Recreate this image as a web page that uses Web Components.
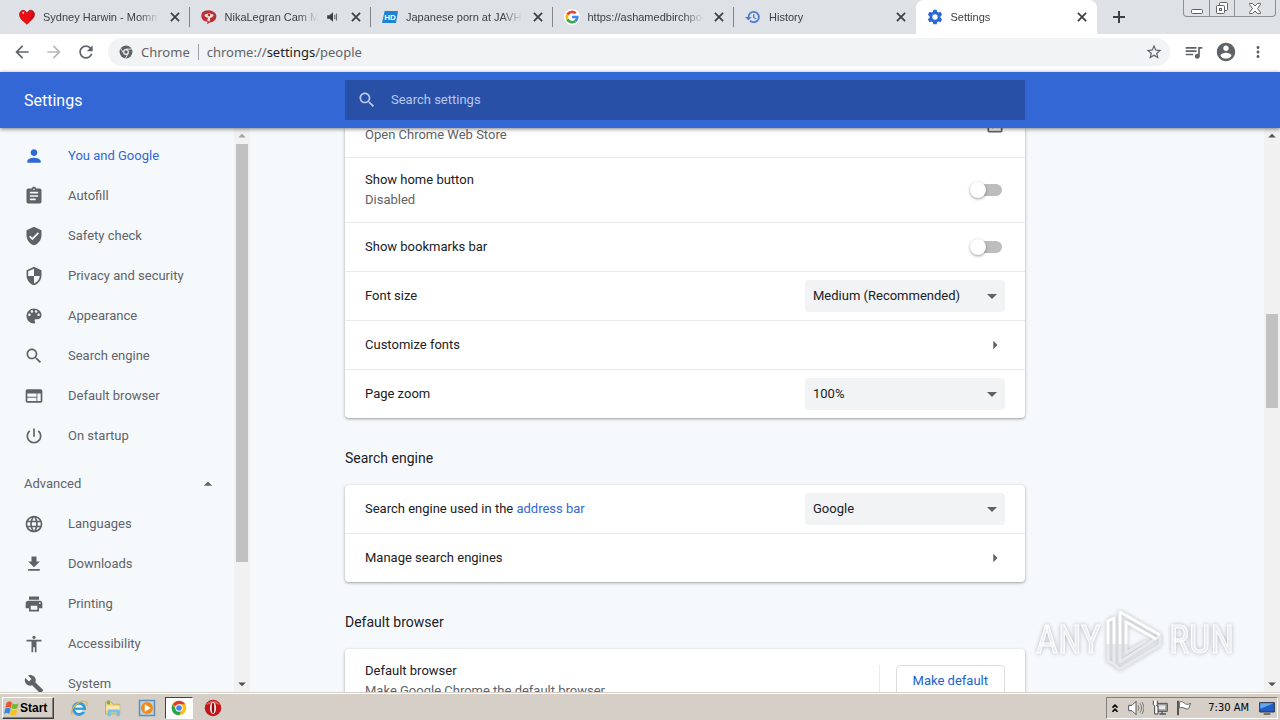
<!DOCTYPE html>
<html lang="en">
<head>
<meta charset="utf-8">
<title>Settings</title>
<style>
  html, body { height: 100%; margin: 0; }
  body {
    display: flex;
    flex-direction: column;
    overflow: hidden;
    background: #f6f9fc;
    color: #202124;
    font: 13px/20px Roboto, "Liberation Sans", sans-serif;
  }
  main { flex: 1; min-height: 0; display: flex; position: relative; }
</style>
</head>
<body>
<tab-strip>
  <browser-tab icon="heart">Sydney Harwin - Mommy</browser-tab>
  <browser-tab icon="cam" audio>NikaLegran Cam Models</browser-tab>
  <browser-tab icon="hd">Japanese porn at JAVHD</browser-tab>
  <browser-tab icon="google">https://ashamedbirchpoe</browser-tab>
  <browser-tab icon="history">History</browser-tab>
  <browser-tab icon="gear" active>Settings</browser-tab>
</tab-strip>
<browser-toolbar></browser-toolbar>
<settings-header></settings-header>
<main>
  <side-nav>
    <nav-item icon="person" selected>You and Google</nav-item>
    <nav-item icon="clipboard">Autofill</nav-item>
    <nav-item icon="shieldcheck">Safety check</nav-item>
    <nav-item icon="shield">Privacy and security</nav-item>
    <nav-item icon="palette">Appearance</nav-item>
    <nav-item icon="search">Search engine</nav-item>
    <nav-item icon="web">Default browser</nav-item>
    <nav-item icon="power">On startup</nav-item>
    <nav-toggle>Advanced</nav-toggle>
    <nav-item icon="globe">Languages</nav-item>
    <nav-item icon="download">Downloads</nav-item>
    <nav-item icon="print">Printing</nav-item>
    <nav-item icon="access">Accessibility</nav-item>
    <nav-item icon="wrench">System</nav-item>
  </side-nav>
  <settings-page>
    <settings-card continued>
      <settings-row kind="launch" sub="Open Chrome Web Store"></settings-row>
      <settings-row kind="toggle" label="Show home button" sub="Disabled"></settings-row>
      <settings-row kind="toggle" label="Show bookmarks bar"></settings-row>
      <settings-row kind="select" label="Font size" value="Medium (Recommended)"></settings-row>
      <settings-row kind="link" label="Customize fonts"></settings-row>
      <settings-row kind="select" label="Page zoom" value="100%"></settings-row>
    </settings-card>
    <settings-card heading="Search engine">
      <settings-row kind="select" label="Search engine used in the " link="address bar" value="Google"></settings-row>
      <settings-row kind="link" label="Manage search engines"></settings-row>
    </settings-card>
    <settings-card heading="Default browser">
      <settings-row kind="button" label="Default browser" sub="Make Google Chrome the default browser" value="Make default"></settings-row>
    </settings-card>
  </settings-page>
  <scroll-bar style="--before: 170; --thumb: 94; --after: 268"></scroll-bar>
  <water-mark></water-mark>
</main>
<task-bar></task-bar>

<script>
const ICONS = {
  person: '<path d="M12 12c2.21 0 4-1.79 4-4s-1.79-4-4-4-4 1.79-4 4 1.79 4 4 4zm0 2c-2.67 0-8 1.34-8 4v2h16v-2c0-2.66-5.33-4-8-4z"/>',
  clipboard: '<path d="M19 3h-4.18C14.4 1.84 13.3 1 12 1s-2.4.84-2.82 2H5c-1.1 0-2 .9-2 2v14c0 1.1.9 2 2 2h14c1.1 0 2-.9 2-2V5c0-1.1-.9-2-2-2zm-7 0c.55 0 1 .45 1 1s-.45 1-1 1-1-.45-1-1 .45-1 1-1zm2 14H7v-2h7v2zm3-4H7v-2h10v2zm0-4H7V7h10v2z"/>',
  shieldcheck: '<path d="M12 1 3 5v6c0 5.55 3.84 10.74 9 12 5.16-1.26 9-6.45 9-12V5l-9-4zm-2 16-4-4 1.41-1.41L10 14.17l6.59-6.59L18 9l-8 8z"/>',
  shield: '<path d="M12 1 3 5v6c0 5.55 3.84 10.74 9 12 5.16-1.26 9-6.45 9-12V5l-9-4zm0 10.99h7c-.53 4.12-3.28 7.79-7 8.94V12H5V6.3l7-3.11v8.8z"/>',
  palette: '<path d="M12 3c-4.97 0-9 4.03-9 9s4.03 9 9 9c.83 0 1.5-.67 1.5-1.5 0-.39-.15-.74-.39-1.01-.23-.26-.38-.61-.38-.99 0-.83.67-1.5 1.5-1.5H16c2.76 0 5-2.24 5-5 0-4.42-4.03-8-9-8zm-5.5 9c-.83 0-1.5-.67-1.5-1.5S5.67 9 6.5 9 8 9.67 8 10.5 7.33 12 6.5 12zm3-4C8.67 8 8 7.33 8 6.5S8.67 5 9.5 5s1.5.67 1.5 1.5S10.33 8 9.5 8zm5 0c-.83 0-1.5-.67-1.5-1.5S13.67 5 14.5 5s1.5.67 1.5 1.5S15.33 8 14.5 8zm3 4c-.83 0-1.5-.67-1.5-1.5S16.67 9 17.5 9s1.5.67 1.5 1.5-.67 1.5-1.5 1.5z"/>',
  search: '<path d="M15.5 14h-.79l-.28-.27C15.41 12.59 16 11.11 16 9.5 16 5.91 13.09 3 9.5 3S3 5.91 3 9.5 5.91 16 9.5 16c1.61 0 3.09-.59 4.23-1.57l.27.28v.79l5 4.99L20.49 19l-4.99-5zm-6 0C7.01 14 5 11.99 5 9.5S7.01 5 9.5 5 14 7.01 14 9.5 11.99 14 9.5 14z"/>',
  web: '<path d="M20 4H4c-1.1 0-1.99.9-1.99 2L2 18c0 1.1.9 2 2 2h16c1.1 0 2-.9 2-2V6c0-1.1-.9-2-2-2zm-5 14H4v-4h11v4zm0-5H4V9h11v4zm5 5h-4V9h4v9z"/>',
  power: '<path d="M13 3h-2v10h2V3zm4.83 2.17-1.42 1.42C17.99 7.86 19 9.81 19 12c0 3.87-3.13 7-7 7s-7-3.13-7-7c0-2.19 1.01-4.14 2.58-5.42L6.17 5.17C4.23 6.82 3 9.26 3 12c0 4.97 4.03 9 9 9s9-4.03 9-9c0-2.74-1.23-5.18-3.17-6.83z"/>',
  globe: '<path d="M11.99 2C6.47 2 2 6.48 2 12s4.47 10 9.99 10C17.52 22 22 17.52 22 12S17.52 2 11.99 2zm6.93 6h-2.95c-.32-1.25-.78-2.45-1.38-3.56 1.84.63 3.37 1.91 4.33 3.56zM12 4.04c.83 1.2 1.48 2.53 1.91 3.96h-3.82c.43-1.43 1.08-2.76 1.91-3.96zM4.26 14C4.1 13.36 4 12.69 4 12s.1-1.36.26-2h3.38c-.08.66-.14 1.32-.14 2s.06 1.34.14 2H4.26zm.82 2h2.95c.32 1.25.78 2.45 1.38 3.56-1.84-.63-3.37-1.9-4.33-3.56zm2.95-8H5.08c.96-1.66 2.49-2.93 4.33-3.56C8.81 5.55 8.35 6.75 8.03 8zM12 19.96c-.83-1.2-1.48-2.53-1.91-3.96h3.82c-.43 1.43-1.08 2.76-1.91 3.96zM14.34 14H9.66c-.09-.66-.16-1.32-.16-2s.07-1.35.16-2h4.68c.09.65.16 1.32.16 2s-.07 1.34-.16 2zm.25 5.56c.6-1.11 1.06-2.31 1.38-3.56h2.95c-.96 1.65-2.49 2.93-4.33 3.56zM16.36 14c.08-.66.14-1.32.14-2s-.06-1.34-.14-2h3.38c.16.64.26 1.31.26 2s-.1 1.36-.26 2h-3.38z"/>',
  download: '<path d="M19 9h-4V3H9v6H5l7 7 7-7zM5 18v2h14v-2H5z"/>',
  print: '<path d="M19 8H5c-1.66 0-3 1.34-3 3v6h4v4h12v-4h4v-6c0-1.66-1.34-3-3-3zm-3 11H8v-5h8v5zm3-7c-.55 0-1-.45-1-1s.45-1 1-1 1 .45 1 1-.45 1-1 1zm-1-9H6v4h12V3z"/>',
  access: '<path d="M12 2c1.1 0 2 .9 2 2s-.9 2-2 2-2-.9-2-2 .9-2 2-2zm9 7h-6v13h-2v-6h-2v6H9V9H3V7h18v2z"/>',
  wrench: '<path d="M22.7 19l-9.1-9.1c.9-2.3.4-5-1.5-6.9-2-2-5-2.4-7.4-1.3L9 6 6 9 1.6 4.7C.4 7.1.9 10.1 2.9 12.1c1.9 1.9 4.6 2.4 6.9 1.5l9.1 9.1c.4.4 1 .4 1.4 0l2.3-2.3c.5-.4.5-1.1.1-1.4z"/>',
  up: '<path d="M7 14l5-5 5 5z"/>',
  down: '<path d="M7 10l5 5 5-5z"/>',
  right: '<path d="M10 17l5-5-5-5z"/>',
  launch: '<path d="M19 19H5V5h7V3H5c-1.11 0-2 .9-2 2v14c0 1.1.89 2 2 2h14c1.1 0 2-.9 2-2v-7h-2v7zM14 3v2h3.59l-9.83 9.83 1.41 1.41L19 6.41V10h2V3h-7z"/>',
  back: '<path d="M20 11H7.83l5.59-5.59L12 4l-8 8 8 8 1.41-1.41L7.83 13H20v-2z"/>',
  forward: '<path d="M12 4l-1.41 1.41L16.17 11H4v2h12.17l-5.58 5.59L12 20l8-8z"/>',
  reload: '<path d="M17.65 6.35C16.2 4.9 14.21 4 12 4c-4.42 0-7.99 3.58-7.99 8s3.57 8 7.99 8c3.73 0 6.84-2.55 7.73-6h-2.08c-.82 2.33-3.04 4-5.65 4-3.31 0-6-2.69-6-6s2.69-6 6-6c1.66 0 3.14.69 4.22 1.78L13 11h7V4l-2.35 2.35z"/>',
  star: '<path d="M22 9.24l-7.19-.62L12 2 9.19 8.63 2 9.24l5.46 4.73L5.82 21 12 17.27 18.18 21l-1.63-7.03L22 9.24zM12 15.4l-3.76 2.27 1-4.28-3.32-2.88 4.38-.38L12 6.1l1.71 4.04 4.38.38-3.32 2.88 1 4.28L12 15.4z"/>',
  queue: '<path d="M15 6H2v2h13V6zm0 4H2v2h13v-2zM2 16h9v-2H2v2zM17 6v8.18c-.31-.11-.65-.18-1-.18-1.66 0-3 1.34-3 3s1.34 3 3 3 3-1.34 3-3V8h3V6h-5z"/>',
  account: '<path d="M12 2C6.48 2 2 6.48 2 12s4.48 10 10 10 10-4.48 10-10S17.52 2 12 2zm0 3c1.66 0 3 1.34 3 3s-1.34 3-3 3-3-1.34-3-3 1.34-3 3-3zm0 14.2c-2.5 0-4.71-1.28-6-3.22.03-1.99 4-3.08 6-3.08 1.99 0 5.97 1.09 6 3.08-1.29 1.94-3.5 3.22-6 3.22z"/>',
  more: '<path d="M12 8c1.1 0 2-.9 2-2s-.9-2-2-2-2 .9-2 2 .9 2 2 2zm0 2c-1.1 0-2 .9-2 2s.9 2 2 2 2-.9 2-2-.9-2-2-2zm0 6c-1.1 0-2 .9-2 2s.9 2 2 2 2-.9 2-2-.9-2-2-2z"/>',
  close: '<path d="M5 5l14 14M19 5L5 19" fill="none" stroke="currentColor" stroke-width="3"/>',
  plus: '<path d="M12 3v18M3 12h18" fill="none" stroke="currentColor" stroke-width="3"/>',
  audio: '<path d="M2 9v6h4l6 5V4L6 9z"/><path d="M15 8v8M18 6v12" fill="none" stroke="currentColor" stroke-width="2" opacity=".7"/>',
  gear: '<path fill="#2a67d8" fill-rule="evenodd" d="M9.5 1h5l.6 3.2 2 1.2 3.1-1.1 2.5 4.3-2.5 2.1v2.6l2.5 2.1-2.5 4.3-3.1-1.1-2 1.2-.6 3.2h-5l-.6-3.2-2-1.2-3.1 1.1-2.5-4.3 2.5-2.1v-2.6L1.3 8.6l2.5-4.3 3.1 1.1 2-1.2zM12 8a4 4 0 100 8 4 4 0 000-8z"/>',
  history: '<path fill="#4a7bd0" d="M13 3a9 9 0 00-9 9H0l5 5 5-5H6.500a6.500 6.500 0 116.500 6.500c-1.800 0-3.400-.7-4.600-1.900l-1.700 1.700A9 9 0 1013 3zm-1 5v5l4.300 2.500.9-1.300-3.200-1.900V8z"/>',
  heart: '<path fill="#f00a12" stroke="#9c1114" d="M12 23L4 16C-1 10 0 3 6 2c3 0 5 2 6 5 1-4 4-6 7-5 5 2 6 8 1 13z"/><path d="M5 5l3-1-2 4z" fill="#fff"/><path d="M12 22l9-10c2-4 1-7-1-9 0 8-4 12-8 19z" fill="#bf0911"/>',
  cam: '<path fill="#b93036" d="M2 5c5-5 16-4 20 2 3 6-1 12-8 13l-5 3 1-4C2 19-2 11 2 5z"/><path fill="#f5dede" d="M5 9c4-3 10-3 14 0-1 3-3 4-5 4l-1 6-4-2 2-4c-3 0-5-1-6-4z"/><circle cx="12" cy="9" r="2" fill="#b93036"/>',
  hd: '<path fill="#1d83d4" d="M4 3h20l-3 18H0z"/><text x="12" y="16" fill="#fff" font-family="Liberation Sans,sans-serif" font-size="12" font-weight="700" text-anchor="middle">HD</text>',
  google: '<circle cx="12" cy="12" r="12" fill="#fff"/><g fill="none" stroke-width="4"><path stroke="#ea4335" d="M17.5 6.500A8 8 0 005 8.500"/><path stroke="#fbbc05" d="M5 8.500a8 8 0 000 7"/><path stroke="#34a853" d="M5 15.500a8 8 0 0012 2.700"/><path stroke="#4285f4" d="M17 18.200a8 8 0 003-6.200h-8"/></g>',
  chromegrey: '<circle cx="12" cy="12" r="11"/><circle cx="12" cy="12" r="4" fill="none" stroke="#f1f3f4" stroke-width="2"/><path d="M12 7h10M8 14L3 6M16 14l-5 9" stroke="#f1f3f4" stroke-width="1.500"/>',
  chrome: '<circle cx="12" cy="12" r="11" fill="#fbc116"/><path fill="#e33b2e" d="M12 12L2.500 6.500A11 11 0 0121.500 6.500H12z"/><path fill="#2ba24c" d="M2.500 6.500A11 11 0 0012 23l4.500-8.500H8z"/><circle cx="12" cy="12" r="5.500" fill="#fff"/><circle cx="12" cy="12" r="4.200" fill="#4285f4"/>',
  ie: '<circle cx="12" cy="13" r="7.500" fill="#e5f5fc" stroke="#359bd8" stroke-width="4"/><path d="M6 13h15" stroke="#359bd8" stroke-width="3"/><path d="M16 16h7" stroke="#d6cfc7" stroke-width="2.500"/><path d="M3 21C-2 14 14-1 22 4c2 1 1 4 0 5" fill="none" stroke="#e9b63c" stroke-width="1.800"/>',
  folder: '<path fill="#edd27b" stroke="#c1a150" d="M2 4h8l2 3h9v13H2z"/><path fill="#f8e8ad" d="M3 9h18v7H3z"/><path fill="#7cbfe4" d="M5 14h16v9h-4v-5H9v5H5z"/><path fill="#6ab562" d="M4 2h4v5H4z"/>',
  player: '<path fill="#b9d7ec" stroke="#5f8eb5" stroke-width="2" d="M2 2h20v20H2z"/><circle cx="12" cy="12" r="8" fill="#f28a17"/><path fill="#fff" d="M9 7l8 5-8 5z"/>',
  opera: '<circle cx="12" cy="12" r="11" fill="#c3161c"/><path fill="#e0575a" d="M3 8a10 10 0 0118 0q-9-4-18 0z"/><ellipse cx="12" cy="12" rx="4" ry="8" fill="#fff"/><ellipse cx="12" cy="12" rx="1.800" ry="7" fill="#8c0c10"/>',
  windows: '<path fill="#e8562a" d="M4 4c3-3 6-2 8 0l-2 8c-3-2-5-2-8 0z"/><path fill="#77b72f" d="M13 5c3 2 6 2 9-1l-2 8c-3 2-6 2-9 0z"/><path fill="#3b87d6" d="M2 13c3-2 5-2 8 0l-2 8c-3-2-5-2-8 0z"/><path fill="#f6c21c" d="M11 14c3 2 6 2 9 0l-2 8c-3 2-6 2-9 0z"/>',
  chevrons: '<path d="M6 11l6-6 6 6M6 21l6-6 6 6" fill="none" stroke="#000" stroke-width="4"/>',
  speaker: '<path fill="#fff" stroke="#555" stroke-width="1.500" d="M1 8h5l6-6v20l-6-6H1z"/><path d="M15 8q3 4 0 8M18 5q5 7 0 14M21 3q6 9 0 18" fill="none" stroke="#777" stroke-width="1.500"/>',
  network: '<path fill="#9a9a9a" stroke="#555" stroke-width="1.500" d="M7 5h16v12H7z"/><path fill="#e8e8e8" d="M10 8h10v6H10z"/><path d="M11 21h10M15 17v4" stroke="#555" stroke-width="2"/><path fill="#fff" stroke="#444" stroke-width="1.500" d="M2 1v6l2 2v12h5V9H7l1-2V1"/>',
  flag: '<path d="M3 1v22" stroke="#555" stroke-width="3"/><path fill="#fff" stroke="#666" stroke-width="1.500" d="M5 3c4-1 6 0 8 2s5 2 9 0l-3 8c-3 1-5 0-7-1s-4-1-7 0z"/>',
  desktop: '<path fill="#1f5fc4" stroke="#28334a" stroke-width="1.500" d="M1 4h22v14H1z"/><path fill="#6aa8ec" d="M2 5h20L2 13z"/><path fill="#444" d="M7 20h10v2H7z"/>'
};

// Small base class: every element just fills its own open shadow root.
class UiElement extends HTMLElement {
  constructor() {
    super();
    this.attachShadow({ mode: 'open' });
  }
  connectedCallback() {
    this.shadowRoot.innerHTML = `<style>*{box-sizing:border-box}button{font:inherit;color:inherit;border:0;background:none;padding:0;display:grid;place-items:center}${this.css()}</style>${this.html()}`;
  }
  css() { return ':host{display:block}'; }
  html() { return '<slot></slot>'; }
  attr(name) { return this.getAttribute(name) || ''; }
}

customElements.define('ui-icon', class extends UiElement {
  css() { return ':host{display:block;flex:none;width:var(--size,20px);height:var(--size,20px)} svg{display:block;width:100%;height:100%;fill:currentColor}'; }
  html() { return `<svg viewBox="0 0 24 24" aria-hidden="true">${ICONS[this.attr('name')]}</svg>`; }
});

/* --- browser frame --- */

customElements.define('tab-strip', class extends UiElement {
  css() {
    return `
      :host { display:flex; flex:none; height:34px; background:#dee1e6; padding-left:8px; }
      .tabs { display:grid; grid-template-columns:repeat(6, minmax(0, 1fr)); flex:0 1 1089px; }
      .new { width:28px; height:34px; margin-left:8px; color:#3c4043; --size:16px; }
      .window { display:flex; flex:none; align-self:start; margin:0 4px 0 auto; border:1px solid #8b8f96; border-top:0; border-radius:0 0 4px 4px; color:#5f6368; }
      .window button { width:25px; height:16px; }
      .window button + button { border-left:1px solid #8b8f96; }
      .window button:last-child { width:41px; }
      svg { fill:#fff; stroke:#5f6368; }
    `;
  }
  html() {
    return `
      <div class="tabs"><slot></slot></div>
      <button class="new" aria-label="New tab"><ui-icon name="plus"></ui-icon></button>
      <div class="window">
        <button aria-label="Minimize"><svg width="14" height="14"><rect x="1.500" y="8.500" width="11" height="4" rx="1"/></svg></button>
        <button aria-label="Restore"><svg width="14" height="14"><rect x="4.500" y="1.500" width="8" height="8" rx="1"/><rect x="1.500" y="4.500" width="8" height="8" rx="1"/><rect x="4.500" y="7.500" width="2" height="2"/></svg></button>
        <button aria-label="Close"><svg width="14" height="14"><path d="M1.500 2.500h3L7 5l2.500-2.500h3v1L9.500 7.500l3 4v1h-3L7 10l-2.500 2.500h-3v-1l3-4-3-4z"/></svg></button>
      </div>`;
  }
});

customElements.define('browser-tab', class extends UiElement {
  css() {
    return `
      :host { display:flex; align-items:center; gap:8px; padding:0 7px 0 11px; min-width:0; color:#3c4043; font:11px/16px "Liberation Sans", sans-serif; --size:16px; position:relative; }
      :host([active]) { background:#fff; border-radius:8px 8px 0 0; }
      :host(:not([active]):not([icon="history"]))::after { content:""; width:1px; height:20px; background:#80868b; position:absolute; right:0; top:7px; }
      .title { flex:1; min-width:0; overflow:hidden; white-space:nowrap; -webkit-mask:linear-gradient(to left, transparent, #000 20px); mask:linear-gradient(to left, transparent, #000 20px); }
      button { --size:14px; width:16px; height:16px; }
    `;
  }
  html() {
    return `
      <ui-icon name="${this.attr('icon')}"></ui-icon>
      <span class="title"><slot></slot></span>
      ${this.hasAttribute('audio') ? '<ui-icon name="audio" style="--size:14px"></ui-icon>' : ''}
      <button aria-label="Close tab"><ui-icon name="close"></ui-icon></button>`;
  }
});

customElements.define('browser-toolbar', class extends UiElement {
  css() {
    return `
      :host { display:flex; flex:none; align-items:center; gap:4px; height:38px; padding:0 8px 2px; background:#fff; color:#5f6368; box-sizing:border-box; }
      button { width:28px; height:28px; flex:none; }
      .off { color:#b6b8ba; }
      .box { flex:1; display:flex; align-items:center; height:28px; margin:0 6px 0 4px; padding:0 2px 0 11px; border-radius:14px; background:#f1f3f4; font:13px/20px "Noto Sans", sans-serif; }
      .box ui-icon { --size:14px; }
      .box button ui-icon { --size:18px; }
      .chip { margin-left:8px; padding-right:8px; border-right:1px solid #9aa0a6; line-height:16px; }
      .url { flex:1; margin-left:8px; }
      b { font-weight:400; color:#202124; }
    `;
  }
  html() {
    return `
      <button aria-label="Back"><ui-icon name="back"></ui-icon></button>
      <button aria-label="Forward" class="off"><ui-icon name="forward"></ui-icon></button>
      <button aria-label="Reload"><ui-icon name="reload"></ui-icon></button>
      <div class="box">
        <ui-icon name="chromegrey"></ui-icon>
        <span class="chip">Chrome</span>
        <span class="url">chrome://<b>settings</b>/people</span>
        <button aria-label="Bookmark"><ui-icon name="star"></ui-icon></button>
      </div>
      <button aria-label="Media"><ui-icon name="queue"></ui-icon></button>
      <button aria-label="Profile"><ui-icon name="account" style="--size:22px"></ui-icon></button>
      <button aria-label="Menu"><ui-icon name="more" style="--size:18px"></ui-icon></button>`;
  }
});

/* --- settings --- */

customElements.define('settings-header', class extends UiElement {
  css() {
    return `
      :host { display:flex; flex:none; align-items:center; height:56px; background:#3367d6; color:#fff; box-shadow:0 1px 4px rgba(0,0,0,.5); z-index:1; }
      h1 { flex:0 0 345px; margin:0; padding:2px 0 0 24px; font-size:16px; font-weight:400; line-height:24px; }
      label { flex:0 1 680px; display:flex; align-items:center; gap:14px; height:40px; padding:0 12px; background:#2850a7; color:#b8c9ee; }
      input { flex:1; min-width:0; border:0; padding:0; background:none; color:#fff; font:inherit; outline:0; }
      input::placeholder { color:#b8c9ee; opacity:1; }
    `;
  }
  html() {
    return `<h1>Settings</h1>
      <label><ui-icon name="search"></ui-icon><input type="search" placeholder="Search settings" aria-label="Search settings"></label>`;
  }
});

customElements.define('scroll-bar', class extends UiElement {
  css() {
    return `
      :host { display:flex; flex:none; flex-direction:column; width:16px; background:#f1f1f1; color:#505050; --size:18px; }
      button { width:16px; height:16px; flex:none; place-content:center; }
      :host([top]) button:first-of-type { color:#a3a3a3; }
      i { flex:var(--before) 0 0; }
      b { flex:var(--thumb) 0 0; margin:0 2px; background:#c1c1c1; }
      u { flex:var(--after) 0 0; }
    `;
  }
  html() {
    return '<button aria-label="Scroll up"><ui-icon name="up"></ui-icon></button><i></i><b></b><u></u><button aria-label="Scroll down"><ui-icon name="down"></ui-icon></button>';
  }
});

customElements.define('side-nav', class extends UiElement {
  css() {
    return `
      :host { display:flex; flex:0 0 250px; min-height:0; overflow:hidden; }
      nav { flex:1; padding-top:8px; overflow:hidden; }
    `;
  }
  html() { return '<nav><slot></slot></nav><scroll-bar top style="--before: 0; --thumb: 418; --after: 114"></scroll-bar>'; }
});

customElements.define('nav-item', class extends UiElement {
  css() {
    return `
      :host { display:block; --size:20px; }
      a { display:flex; align-items:center; gap:24px; height:40px; padding-left:24px; color:#5f6368; text-decoration:none; }
      :host([selected]) a { color:#3367d6; }
    `;
  }
  html() { return `<a href="#"><ui-icon name="${this.attr('icon')}"></ui-icon><slot></slot></a>`; }
});

customElements.define('nav-toggle', class extends UiElement {
  css() {
    return `
      :host { display:block; margin-top:8px; }
      button { display:flex; align-items:center; justify-content:space-between; width:100%; height:40px; padding:0 16px 0 24px; color:#5f6368; }
    `;
  }
  html() { return '<button aria-expanded="true"><slot></slot><ui-icon name="up"></ui-icon></button>'; }
});

customElements.define('settings-page', class extends UiElement {
  css() { return ':host{display:block;flex:1;min-width:0;overflow:hidden;padding:0 20px 0 95px} .col{max-width:680px}'; }
  html() { return '<div class="col"><slot></slot></div>'; }
});

customElements.define('settings-card', class extends UiElement {
  css() {
    return `
      :host { display:block; }
      h2 { margin:0; padding:30px 0 17px; font-size:14px; font-weight:400; line-height:20px; }
      .card { background:#fff; border-radius:4px; box-shadow:0 1px 2px rgba(60,64,67,.3), 0 1px 3px 1px rgba(60,64,67,.15); }
      :host([continued]) .card { border-radius:0 0 4px 4px; }
    `;
  }
  html() { return `${this.attr('heading') ? `<h2>${this.attr('heading')}</h2>` : ''}<div class="card"><slot></slot></div>`; }
});

customElements.define('settings-row', class extends UiElement {
  css() {
    return `
      :host { display:flex; align-items:center; min-height:48px; padding:0 20px; }
      :host([sub]) { min-height:64px; }
      :host(:not(:last-child)) { border-bottom:1px solid #e8eaed; }
      :host([kind="launch"]) { min-height:0; height:29px; overflow:hidden; }
      .text { flex:1; }
      label, .sub { display:block; }
      .sub, .icon { color:#5f6368; }
      :host([kind="launch"]) .text { align-self:start; line-height:14px; }
      a { color:#3367d6; text-decoration:none; }
      .icon { --size:20px; }
      :host([kind="launch"]) .icon { align-self:end; padding-bottom:22px; }
      .toggle { appearance:none; display:flex; align-items:center; width:32px; height:16px; margin:0 3px 0 0; }
      .toggle::before { content:""; width:16px; height:16px; border-radius:8px; background:#fff; box-shadow:0 1px 3px rgba(0,0,0,.4); z-index:1; }
      .toggle::after { content:""; flex:1; height:12px; margin-left:-8px; border-radius:6px; background:#bdbdbd; }
      .select { display:grid; align-items:center; flex:0 0 200px; --size:24px; }
      .select > * { grid-area:1/1; }
      .select ui-icon { justify-self:end; margin-right:1px; color:#5f6368; pointer-events:none; }
      select { appearance:none; width:100%; height:32px; padding:0 32px 0 8px; border:0; border-radius:4px; background:#f1f3f4; color:#202124; font:inherit; }
      .action { align-self:stretch; display:flex; align-items:center; margin:16px 0; padding-left:16px; border-left:1px solid #e8eaed; }
      .action button { height:32px; padding:0 16px; border:1px solid #dadce0; border-radius:4px; color:#1a62d4; }
    `;
  }
  control() {
    const value = this.attr('value');
    switch (this.attr('kind')) {
      case 'toggle': return '<input id="ctl" class="toggle" type="checkbox" role="switch">';
      case 'select': return `<div class="select"><select id="ctl"><option>${value}</option></select><ui-icon name="down"></ui-icon></div>`;
      case 'link': return '<button id="ctl" class="icon"><ui-icon name="right"></ui-icon></button>';
      case 'launch': return '<button id="ctl" class="icon" aria-label="Open"><ui-icon name="launch"></ui-icon></button>';
      case 'button': return `<div class="action"><button id="ctl">${value}</button></div>`;
    }
    return '';
  }
  html() {
    const link = this.attr('link') ? `<a href="#">${this.attr('link')}</a>` : '';
    const label = this.attr('label') ? `<label for="ctl">${this.attr('label')}${link}</label>` : '';
    const sub = this.attr('sub') ? `<span class="sub">${this.attr('sub')}</span>` : '';
    return `<div class="text">${label}${sub}</div>${this.control()}`;
  }
});

customElements.define('water-mark', class extends UiElement {
  css() {
    return `
      :host { display:flex; align-items:center; position:absolute; right:46px; bottom:20px; gap:4px; color:#e9ecee; opacity:.9; font:38px/64px "Liberation Sans Narrow", "Roboto Condensed", Roboto, sans-serif; -webkit-text-stroke:1px #fff; filter:drop-shadow(0 0 2px rgba(0,0,0,.3)); pointer-events:none; }
      svg { display:block; fill:none; stroke:#fff; stroke-width:3; stroke-linejoin:round; }
      .low { stroke:#e6e9eb; }
    `;
  }
  html() {
    return '<span>ANY</span><svg width="60" height="64" viewBox="0 0 60 64"><path class="low" d="M3 36v17l6 3V36M9 56l6 5 40-24v-9L15 54V36M21 36v9l20-12"/><path d="M3 36V13l6-3v26M15 36V4l40 23M21 36V14l30 17"/></svg><span>RUN</span>';
  }
});

/* --- desktop task bar --- */

customElements.define('task-bar', class extends UiElement {
  css() {
    return `
      :host { display:flex; flex:none; align-items:center; height:28px; padding:2px 2px 0; box-sizing:border-box; border-top:1px solid #d6cfc7; background:#d6cfc7; box-shadow:inset 0 1px #fff; color:#000; font:11px/16px "DejaVu Sans Condensed", "DejaVu Sans", sans-serif; z-index:1; }
      .start { display:flex; width:52px; height:22px; padding:0 1px; border:1px solid; border-color:#fff #404040 #404040 #fff; box-shadow:inset -1px -1px #808080; font:bold 12px/16px "Liberation Sans", sans-serif; --size:16px; }
      .apps { display:flex; margin-left:9px; gap:2px; --size:18px; }
      .apps button { width:32px; height:22px; }
      .apps .on { width:28px; margin:0 2px 0 0; background:#fff; border:1px solid; border-color:#404040 #fff #fff #404040; --size:16px; }
      .tray { display:flex; align-items:center; gap:8px; height:22px; margin-left:auto; padding:0 2px 0 3px; border:1px solid; border-color:#808080 #fff #fff #808080; --size:16px; }
      .tray time { margin:0 2px 0 8px; }
    `;
  }
  html() {
    const tray = ['speaker', 'network', 'flag'].map(n => `<ui-icon name="${n}"></ui-icon>`).join('');
    return `
      <button class="start"><ui-icon name="windows"></ui-icon>Start</button>
      <div class="apps">
        <button aria-label="Internet Explorer"><ui-icon name="ie"></ui-icon></button>
        <button aria-label="Explorer"><ui-icon name="folder"></ui-icon></button>
        <button aria-label="Media Player"><ui-icon name="player"></ui-icon></button>
        <button aria-label="Chrome" class="on"><ui-icon name="chrome"></ui-icon></button>
        <button aria-label="Opera"><ui-icon name="opera"></ui-icon></button>
      </div>
      <div class="tray"><ui-icon name="chevrons" style="--size:10px"></ui-icon>${tray}<time>7:30 AM</time><ui-icon name="desktop"></ui-icon></div>`;
  }
});
</script>
</body>
</html>
